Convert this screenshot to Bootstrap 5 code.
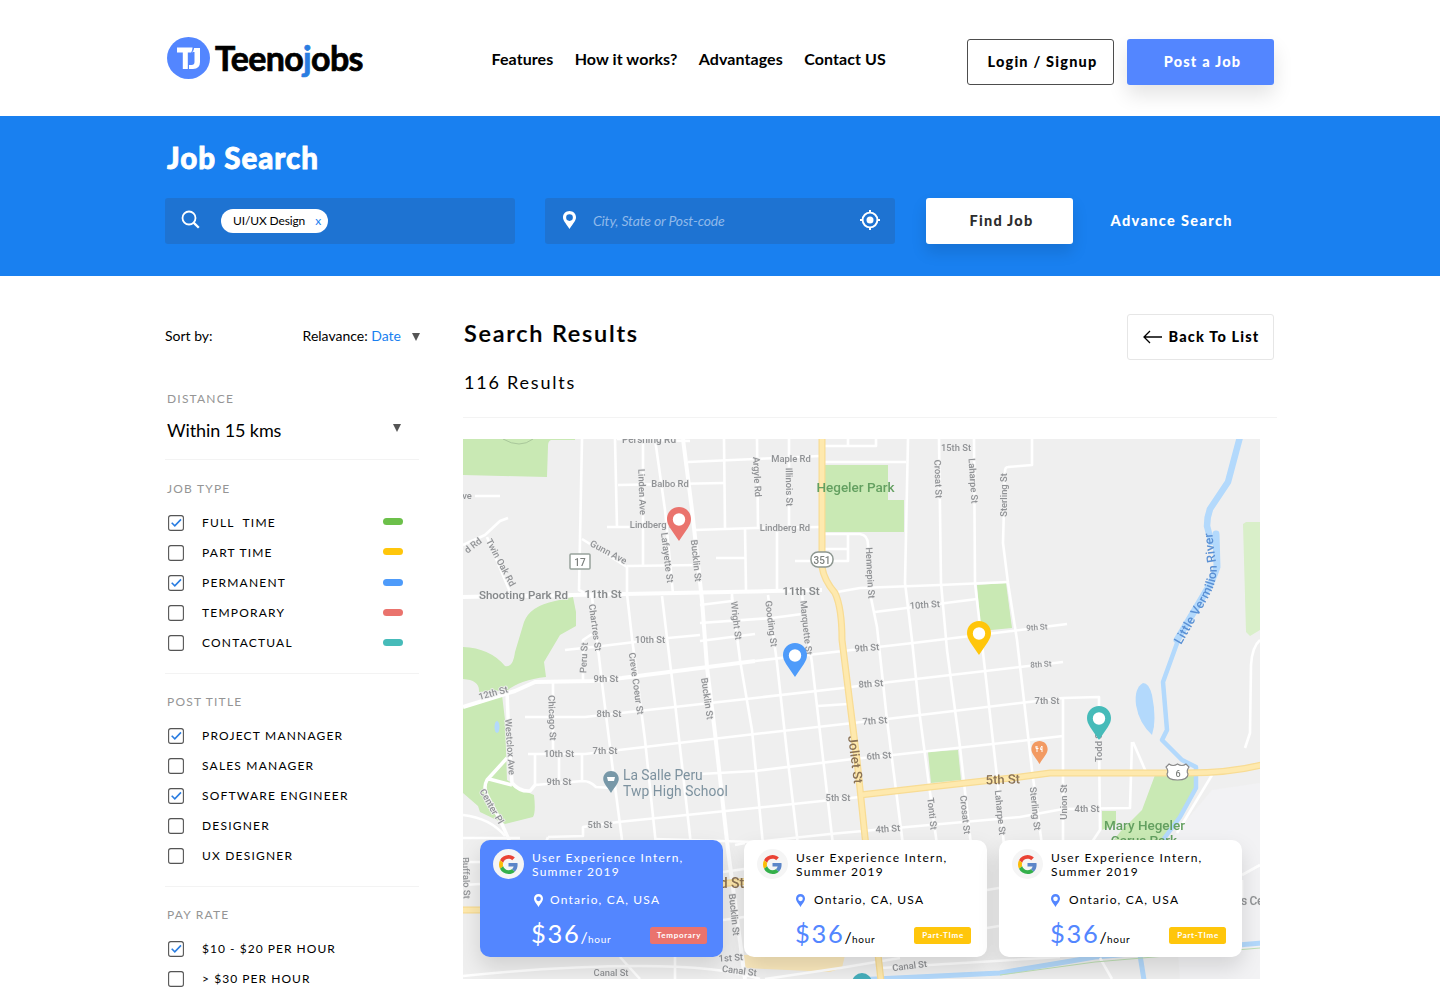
<!DOCTYPE html>
<html lang="en">
<head>
<meta charset="utf-8">
<meta name="viewport" content="width=device-width, initial-scale=1">
<title>Teenojobs - Job Search</title>
<link rel="stylesheet" href="https://cdn.jsdelivr.net/npm/bootstrap@5.3.0/dist/css/bootstrap.min.css">
<style>
body{font-family:Lato,"Liberation Sans",sans-serif;color:#000;background:#fff;font-size:14px}
.wrap{width:1110px;margin:0 auto}
.site-head{height:116px}
.brand-word{font-size:34px;font-weight:700;line-height:42px;letter-spacing:-.65px;margin-left:5px;width:276.500px;white-space:nowrap;-webkit-text-stroke:.7px currentColor}
.brand-word span{color:#2a7de1}
.main-nav{gap:21.3px;font-size:16px;font-weight:700;letter-spacing:.085px;line-height:24px;width:475.500px;white-space:nowrap;padding-top:2px}
.main-nav a{color:#000;text-decoration:none}
.cta{width:147px;height:46px;border-radius:3px;font-weight:900;font-size:14.500px;letter-spacing:1.2px;display:flex;align-items:center;justify-content:center;white-space:nowrap;padding:0;line-height:20px}
.cta-line{border:1px solid #4d4d4d;color:#000;padding-left:4px}
.cta-fill{background:#5386ff;color:#fff;box-shadow:0 10px 20px rgba(0,0,0,.11);padding-left:4px}
.hero{height:160px;background:#1980f0}
.hero h1{font-size:29.500px;font-weight:900;line-height:36px;letter-spacing:1px;color:#fff;margin:0;padding:24px 0 0 2px;-webkit-text-stroke:.8px #fff}
.field{width:350px;height:46px;border-radius:3px;background:#1e73d2}
.tagpill{height:24px;width:107px;border-radius:12px;background:#fff;font-size:12px;line-height:24px;padding:0 7px 0 12px;letter-spacing:-.13px}
.tagpill span{color:#1980f0}
.field em{color:#8fb9ea;font-size:14px;letter-spacing:-.18px;margin-top:-2px}
.cta-white{background:#fff;color:#2d2d2d;box-shadow:0 8px 16px rgba(0,0,0,.12);margin-left:31px;padding-left:4px}
.adv{font-weight:900;font-size:14.500px;letter-spacing:1.36px;color:#fff;margin:0 0 0 37.500px;text-decoration:none}
.side{width:254px;padding-top:50px}
.sort{line-height:20px}
.sort b{font-weight:400;color:#1980f0}
.grp{border-bottom:1px solid #f3f3f3;padding:18px 0 15px 2px}
.grp h2{font-size:12px;font-weight:400;letter-spacing:1.2px;line-height:20px;color:#959595;margin:0}
.opts{margin-top:9px}
.opt{height:30px;font-size:12px;letter-spacing:1.2px;white-space:pre}
.opt svg{margin:0 18px 1px 1px}
.chip{width:20px;height:7px;border-radius:4px;margin:-3px 16px 0 auto}
.res{width:814px;margin-left:44px;padding-top:38px}
.res h2{font-size:23.5px;font-weight:600;letter-spacing:1.75px;line-height:28px;margin:5px 0 0 1px;-webkit-text-stroke:.2px #000}
.res h3{font-size:18px;font-weight:400;letter-spacing:1.78px;line-height:24px;margin:23px 0 0 1px}
.cta-back{border:1px solid #e6e6e6;color:#000;letter-spacing:1.17px;margin-right:3px;padding:0 0 1px 1px}
.mapbox{position:relative;width:797px;height:540px;margin-top:21px;overflow:hidden}
.mapbox>svg{display:block}
.cards{position:absolute;left:17px;top:401px}
.jobc{width:243px;height:117px;border-radius:10px;background:#fff;box-shadow:0 10px 22px rgba(0,0,0,.13);padding:9px 16px 0 13px;letter-spacing:1.25px;font-size:12px;line-height:14px;white-space:nowrap}
.jobc .ava{width:31px;height:30px;border-radius:50%;background:#f5f5f5}
.jobc .ttl{margin:2px 0 0 8px}
.jobc .loc{margin:14px 0 0 41px;height:14px;letter-spacing:1.17px}
.jobc .pay{margin:7px 0 0 38px;height:38px}
.jobc .amt{font-size:25.500px;line-height:38px;color:#5386ff;letter-spacing:1.7px}
.jobc .per{font-size:10px;letter-spacing:.7px}
.jobc .per i{font-size:16px;font-style:normal;letter-spacing:.3px}
.jobc .kind{width:57px;height:17px;border-radius:2.5px;background:#ffc60b;color:#fff;font-size:8px;font-weight:700;letter-spacing:.7px;line-height:17px;text-align:center;margin-top:4px;padding-left:1px}
.jobc.on{background:#5386ff;color:#fff}
.jobc.on .amt{color:#fff}
.jobc.on .kind{background:#ea736d}
</style>
<script src="https://cdn.jsdelivr.net/npm/bootstrap@5.3.0/dist/js/bootstrap.bundle.min.js"></script>
</head>
<body>
<svg width="0" height="0" class="position-absolute">
<defs>
<symbol id="box" viewBox="0 0 16 16"><rect x=".6" y=".6" width="14.8" height="14.8" rx="2.2" fill="#fff" stroke="#555" stroke-width="1.1"/></symbol>
<symbol id="boxon" viewBox="0 0 16 16"><rect x=".6" y=".6" width="14.8" height="14.8" rx="2.2" fill="#fff" stroke="#555" stroke-width="1.1"/><path d="M3.700 7.800l3.100 3L13 4.400" fill="none" stroke="#2a7de1" stroke-width="1.600"/></symbol>
<symbol id="pin" viewBox="0 0 24 34"><path fill-rule="evenodd" d="M12 0C5.2 0 0 5.3 0 12c0 6.200 4.300 10.200 12 22 7.700-11.800 12-15.800 12-22C24 5.300 18.800 0 12 0zm0 6.300a6.200 6.200 0 1 1 0 12.400a6.200 6.200 0 1 1 0-12.400z"/></symbol>
<symbol id="goog" viewBox="0 0 48 48"><path fill="#ea4335" d="M24 9.500c3.540 0 6.710 1.220 9.210 3.600l6.850-6.850C35.900 2.380 30.470 0 24 0 14.620 0 6.510 5.380 2.560 13.220l7.980 6.190C12.430 13.720 17.740 9.500 24 9.500z"/><path fill="#5c86c8" d="M46.980 24.550c0-1.570-.15-3.090-.38-4.550H24v9.020h12.940c-.58 2.960-2.260 5.480-4.780 7.180l7.730 6c4.510-4.180 7.090-10.360 7.090-17.650z"/><path fill="#fbbc05" d="M10.530 28.590c-.48-1.450-.76-2.990-.76-4.590s.27-3.140.76-4.590l-7.980-6.190C.92 16.460 0 20.120 0 24c0 3.880.92 7.540 2.560 10.780l7.970-6.190z"/><path fill="#34b04b" d="M24 48c6.480 0 11.930-2.130 15.890-5.810l-7.730-6c-2.150 1.450-4.920 2.300-8.160 2.300-6.260 0-11.570-4.220-13.470-9.910l-7.980 6.190C6.510 42.620 14.620 48 24 48z"/></symbol>
</defs>
</svg>

<header class="site-head">
<div class="wrap d-flex align-items-center h-100">
  <svg class="flex-shrink-0" style="margin-left:2px" width="43" height="42" viewBox="0 0 43 42"><ellipse cx="21.500" cy="21" rx="21.500" ry="21" fill="#5386ff"/><path d="M10 13H25.500M18.300 12V32" stroke="#fff" stroke-width="5" fill="none"/><path d="M27 11H33V25Q33 32 26 32H22V28H24.500Q27.500 28 27.500 25V15H26z" fill="#fff"/><path d="M26.500 11L24 17" stroke="#5386ff" stroke-width=".9" fill="none"/></svg>
  <div class="brand-word">Teeno<span>j</span>obs</div>
  <nav class="main-nav d-flex"><a href="#">Features</a><a href="#">How it works?</a><a href="#">Advantages</a><a href="#">Contact US</a></nav>
  <div class="d-flex pt-2" style="gap:13px"><a class="btn cta cta-line">Login / Signup</a><a class="btn cta cta-fill">Post a Job</a></div>
</div>
</header>

<section class="hero">
<div class="wrap">
  <h1>Job Search</h1>
  <div class="d-flex align-items-center" style="margin-top:22px">
    <div class="field d-flex align-items-center">
      <svg style="margin:-3px 21px 0 16px" width="19" height="19" viewBox="0 0 19 19" fill="none" stroke="#fff"><circle cx="8" cy="8" r="6.500" stroke-width="1.800"/><path d="M12.600 12.600L17.800 17.800" stroke-width="2.300"/></svg>
      <div class="tagpill d-flex justify-content-between">UI/UX Design<span>x</span></div>
    </div>
    <div class="field d-flex align-items-center" style="margin-left:30px">
      <svg style="margin:-2px 17px 0 18px" width="13" height="18" viewBox="0 0 24 34" preserveAspectRatio="none" fill="#fff"><use href="#pin" width="24" height="34"/></svg>
      <em>City, State or Post-code</em>
      <svg class="ms-auto" style="margin:-2px 15px 0 0" width="20" height="20" viewBox="0 0 20 20" fill="none" stroke="#fff"><circle cx="10" cy="10" r="7.400" stroke-width="1.900"/><circle cx="10" cy="10" r="3.500" fill="#fff" stroke="none"/><path d="M10 0v3M10 17v3M0 10h3M17 10h3" stroke-width="2"/></svg>
    </div>
    <a class="btn cta cta-white">Find Job</a>
    <a class="adv" href="#">Advance Search</a>
  </div>
</div>
</section>

<div class="wrap d-flex">
<aside class="side flex-shrink-0">
  <div class="sort d-flex"><span>Sort by:</span><span class="ms-auto">Relavance: <b>Date</b></span><svg style="margin:7px -1px 0 11px" width="8" height="8"><path d="M0 0h8L4 8z" fill="#555"/></svg></div>
  <div class="grp" style="padding:43px 0 17px 2px"><h2>DISTANCE</h2>
    <div class="d-flex" style="font-size:18px;line-height:24px;margin-top:9px;letter-spacing:-.1px"><span>Within 15 kms</span><svg class="ms-auto" style="margin:6px 18px 0 0" width="8" height="8"><path d="M0 0h8L4 8z" fill="#555"/></svg></div></div>
  <div class="grp" style="padding-top:19px"><h2>JOB TYPE</h2><div class="opts">
    <div class="opt d-flex align-items-center"><svg width="16" height="16"><use href="#boxon"/></svg>FULL  TIME<span class="chip" style="background:#6cc04a"></span></div>
    <div class="opt d-flex align-items-center"><svg width="16" height="16"><use href="#box"/></svg>PART TIME<span class="chip" style="background:#ffc60b"></span></div>
    <div class="opt d-flex align-items-center"><svg width="16" height="16"><use href="#boxon"/></svg>PERMANENT<span class="chip" style="background:#4e9bfa;margin-top:-1px"></span></div>
    <div class="opt d-flex align-items-center"><svg width="16" height="16"><use href="#box"/></svg>TEMPORARY<span class="chip" style="background:#ea736d;margin-top:-1px"></span></div>
    <div class="opt d-flex align-items-center"><svg width="16" height="16"><use href="#box"/></svg>CONTACTUAL<span class="chip" style="background:#46bbb9;margin-top:-1px"></span></div>
  </div></div>
  <div class="grp"><h2>POST TITLE</h2><div class="opts">
    <div class="opt d-flex align-items-center"><svg width="16" height="16"><use href="#boxon"/></svg>PROJECT MANNAGER</div>
    <div class="opt d-flex align-items-center"><svg width="16" height="16"><use href="#box"/></svg>SALES MANAGER</div>
    <div class="opt d-flex align-items-center"><svg width="16" height="16"><use href="#boxon"/></svg>SOFTWARE ENGINEER</div>
    <div class="opt d-flex align-items-center"><svg width="16" height="16"><use href="#box"/></svg>DESIGNER</div>
    <div class="opt d-flex align-items-center"><svg width="16" height="16"><use href="#box"/></svg>UX DESIGNER</div>
  </div></div>
  <div class="grp border-0 pb-0"><h2>PAY RATE</h2><div class="opts">
    <div class="opt d-flex align-items-center" style="letter-spacing:1.03px"><svg width="16" height="16"><use href="#boxon"/></svg>$10 - $20 PER HOUR</div>
    <div class="opt d-flex align-items-center" style="letter-spacing:1.05px"><svg width="16" height="16"><use href="#box"/></svg>&gt; $30 PER HOUR</div>
  </div></div>
</aside>

<main class="res flex-shrink-0">
  <div class="d-flex justify-content-between align-items-start" style="height:103px">
    <div><h2>Search Results</h2><h3>116 Results</h3></div>
    <a class="btn cta cta-back"><svg style="margin-right:7px" width="19" height="14" fill="none" stroke="#000" stroke-width="1.300"><path d="M7 1L1 7l6 6M1 7h18"/></svg>Back To List</a>
  </div>
  <div style="height:1px;background:#f3f3f3"></div>
  <div class="mapbox">
  <svg width="797" height="540" viewBox="463 439 797 540">
    <defs><filter id="soft" x="-5%" y="-5%" width="110%" height="110%"><feGaussianBlur stdDeviation=".5"/></filter></defs>
    <rect x="463" y="439" width="797" height="540" fill="#efefef"/>
    <g filter="url(#soft)">
    <path fill="#f2f2f4" d="M1212 790L1260 783V979H1180L1170 840z"/>
    <g fill="#c9e9b4">
      <path d="M463 439H575V440H551Q548 441 548 446L547 477L463 475z"/>
      <path d="M824 465H888V500H904V532H824z"/>
      <path d="M977 585L1006 583L1012 628L981 631z"/>
      <path d="M573 597L576 612V626L560 635L544 662L546 677Q520 680 508 690L479 692Q480 680 463 679V647Q490 648 505 666Q513 668 515 652L524 622Q530 606 555 601z"/>
      <path d="M463 707L502 695L505 720L507 780L527 792L534 795Q536 812 533 817L505 824L480 812L478 806L463 793z"/>
      <path d="M928 752L958 750L961 780L931 783z"/>
      <path d="M1155 775H1195L1197 788L1180 817L1160 845H1110L1120 832L1142 810z"/>
      <path d="M1102 811H1116V824L1102 830z"/>
    </g>
    <path fill="#d9efc9" d="M1246 522H1260V630L1250 636L1246 632L1243 524z"/>
    <path fill="#fbe9bd" d="M744 955H845L842 968L830 972L745 968z"/>
    <g fill="none" stroke="#b3d9fc">
      <path stroke-width="6.500" stroke-linejoin="round" d="M1240 437L1228 482L1210 509Q1207 517 1207 526L1212 545"/>
      <path stroke-width="7" stroke-linecap="round" d="M1216 534L1217 567Q1212 582 1205 593L1177 640"/>
      <path stroke-width="4.500" stroke-linejoin="round" d="M1180 635L1163 682L1167 730L1162 740L1182 760L1196 767V788L1180 817L1163 840"/>
      <path stroke-width="5" d="M855 980L1000 973L1095 957L1262 943M1140 955L1144 980"/>
    </g>
    <path fill="#b3d9fc" d="M1143 683Q1134 688 1136 705Q1139 723 1152 735Q1157 720 1152 695Q1149 683 1143 683z"/>
    <ellipse cx="497" cy="727" rx="2.500" ry="6" fill="#b3d9fc"/>
    <path d="M503 439Q520 449 533 439" fill="none" stroke="#a9c79b"/>
    <g fill="none" stroke="#fff" stroke-width="2.600" stroke-linejoin="round">
      <path stroke-width="4" d="M463 597L625 594L822 590"/>
      <path d="M837 592L860 588L940 585L1008 582"/>
      <path stroke-width="4" d="M463 707L515 691L535 682L592 681L622 678L755 661"/>
      <path d="M755 661L843 651L913 643L1020 630L1067 624"/>
      <path d="M525 717H585L755 698L843 688L890 682L1020 667L1063 662"/>
      <path d="M528 754H585L755 734L853 723L887 719L1020 703L1063 698L1099 697V740L1100 830L1092 842"/>
      <path d="M700 774L755 771L853 759L893 755L1020 741L1063 736"/>
      <path d="M548 837L583 836V827L618 822L755 808L860 797"/>
      <path d="M655 839L755 842L830 834L907 827L1020 817L1063 809L1130 808L1132 742M1133 742L1146 772"/>
      <path d="M565 650L602 646L668 638L700 635M700 641L755 634M700 623L772 618L802 614M700 605L732 601V594"/>
      <path d="M583 681V640L592 634M875 612L977 599M818 706L848 704"/>
      <path d="M607 527H664M695 530L755 528L820 527M618 485L724 483M688 462L820 456M617 439L690 441"/>
      <path d="M582 439L579 590L592 597L602 683L612 763L622 840"/>
      <path d="M615 439L617 528M643 439V565M655 439L665 510L673 594M724 439L725 529"/>
      <path stroke-width="4" d="M683 439L692 510L702 600L707 667L715 733L728 850L745 979"/>
      <path d="M757 439L758 528M789 439V527M745 528L746 590M777 530V590M716 558H746M582 539L627 567L627 594L632 638L645 740L656 845M627 566L700 565"/>
      <path d="M662 596L667 638L675 703L691 845M732 597L740 660L752 730L763 845M768 595L777 663L787 753L798 845M802 595L812 663L833 845"/>
      <path d="M824 446H876V439M824 462H906M824 534H860Q868 535 868 545L870 593L877 627L887 720L903 845M824 549H848M848 534V561H795M848 439L848 446"/>
      <path d="M908 439L905 583L912 640L920 717L937 845M939 439L941 583L947 650L960 747L971 845M974 439L975 583L985 670L997 777L1004 845M1032 439V465L1008 467Q1005 467 1005 472L1003 543L1008 583L1017 640L1032 770L1042 845M1063 698V845"/>
      <path d="M1260 640Q1252 647 1251 665L1250 733L1245 748M1212 775L1177 833"/>
      <path d="M475 496H500M463 545L485 535L500 521L508 518M487 537L510 592"/>
      <path d="M553 682V754M535 754V785M559 754V783M582 754V781M535 785L583 781Q590 781 596 787L612 788"/>
      <path stroke-width="3.500" d="M507 692L509 740L512 783Q520 792 530 791L535 785M507 758L487 780Q483 787 487 795L500 820L510 842M489 779L512 785"/>
      <path d="M463 815Q490 818 505 836M463 838H520M545 845L548 837M463 885L480 884M463 862H480M735 845L745 843M723 872L744 869M723 920L744 917M987 890L999 888M987 928L999 926M1242 875L1260 865M1242 880V900"/>
      <path d="M463 976Q560 966 640 966T760 979M620 957L640 979M675 957V979M765 979L840 968L900 958M880 968L1060 957M1100 958L1112 979"/>
    </g>
    <path d="M1000 975L1095 962L1260 948" fill="none" stroke="#bfe0b4" stroke-width="1"/>
    <g fill="none">
      <g stroke="#f8dc94" stroke-width="7"><path d="M822 437V567Q824 580 835 593Q842 608 842 640L857 760L865 837L881 981"/><path d="M860 795L930 787L1020 777L1050 773H1177Q1225 774 1262 765M463 910H480M720 884L875 868"/></g>
      <g stroke="#fee9ae" stroke-width="4.500"><path d="M822 437V567Q824 580 835 593Q842 608 842 640L857 760L865 837L881 981"/><path d="M860 795L930 787L1020 777L1050 773H1177Q1225 774 1262 765M463 910H480M720 884L875 868"/></g>
    </g>
    <g font-family="Roboto,sans-serif" font-size="9.400" font-weight="500" fill="#909295" stroke="#efefef" stroke-width="1.600" paint-order="stroke" text-anchor="middle">
      <text x="649" y="443" font-size="10">Pershing Rd</text><text x="791" y="462">Maple Rd</text><text x="670" y="487">Balbo Rd</text><text x="655" y="528">Lindberg Rd</text><text x="785" y="531">Lindberg Rd</text><text x="956" y="451">15th St</text>
      <text x="467" y="499">ve</text><text transform="translate(475 548)rotate(-38)">d Rd</text>
      <text transform="translate(498 564)rotate(62)">Twin Oak Rd</text><text transform="translate(607 555)rotate(28)">Gunn Ave</text>
      <text transform="translate(639 492)rotate(88)">Linden Ave</text><text transform="translate(664 558)rotate(83)">Lafayette St</text><text transform="translate(693 561)rotate(84)">Bucklin St</text><text transform="translate(754 477)rotate(87)">Argyle Rd</text><text transform="translate(786 487)rotate(89)">Illinois St</text>
      <text transform="translate(935 479)rotate(88)">Crosat St</text><text transform="translate(970 481)rotate(86)">Laharpe St</text><text transform="translate(1007 495)rotate(-90)">Sterling St</text><text transform="translate(867 573)rotate(87)">Hennepin St</text>
      <text transform="translate(592 628)rotate(82)">Chartres St</text><text transform="translate(587 658)rotate(-87)">Peru St</text><text transform="translate(633 684)rotate(82)">Creve Coeur St</text><text transform="translate(704 699)rotate(82)">Bucklin St</text><text transform="translate(733 621)rotate(83)">Wright St</text><text transform="translate(768 624)rotate(83)">Gooding St</text><text transform="translate(803 628)rotate(84)">Marquette St</text>
      <text transform="translate(549 718)rotate(88)">Chicago St</text><text transform="translate(507 747)rotate(86)">Westclox Ave</text><text transform="translate(489 808)rotate(60)">Center Pl</text>
      <text x="650" y="643">10th St</text><text x="606" y="682">9th St</text><text x="609" y="717">8th St</text><text x="605" y="754">7th St</text><text x="559" y="757">10th St</text><text x="559" y="785">9th St</text><text x="600" y="828">5th St</text>
      <text transform="translate(494 696)rotate(-15)">12th St</text>
      <text transform="translate(925 608)rotate(-4)">10th St</text><text transform="translate(1037 630)rotate(-4)" font-size="8">9th St</text><text transform="translate(867 651)rotate(-4)">9th St</text><text transform="translate(871 687)rotate(-4)">8th St</text><text transform="translate(875 724)rotate(-4)">7th St</text><text transform="translate(879 759)rotate(-4)">6th St</text><text x="838" y="801">5th St</text><text transform="translate(888 832)rotate(-4)">4th St</text>
      <text transform="translate(1041 667)rotate(-4)" font-size="8">8th St</text><text x="1047" y="704">7th St</text><text x="1087" y="812">4th St</text>
      <text transform="translate(929 814)rotate(84)">Tonti St</text><text transform="translate(962 815)rotate(84)">Crosat St</text><text transform="translate(997 813)rotate(84)">Laharpe St</text><text transform="translate(1032 809)rotate(84)">Sterling St</text><text transform="translate(1067 802)rotate(-90)">Union St</text><text transform="translate(1102 746)rotate(-90)">Todd St</text>
      <text transform="translate(463 878)rotate(88)">Buffalo St</text><text transform="translate(731 915)rotate(84)">Bucklin St</text><text x="611" y="976">Canal St</text><text x="731" y="961" transform="rotate(-4 731 961)">1st St</text><text transform="translate(739 974)rotate(7)">Canal St</text><text transform="translate(910 969)rotate(-7)">Canal St</text>
      <g font-size="11.500" fill="#85888a"><text x="523.500" y="599">Shooting Park Rd</text><text x="603" y="598">11th St</text><text x="801" y="595">11th St</text></g>
      <g fill="#8b7355"><text font-size="13" transform="translate(851 760)rotate(83)" stroke="none">Joliet St</text><text font-size="13" transform="translate(1003 784)rotate(-2)" stroke="none">5th St</text><text font-size="14" x="732" y="888" stroke="none">d St</text></g>
      <text x="855.500" y="492" font-size="13.500" fill="#64a061" stroke="none">Hegeler Park</text>
      <g font-size="13.500" fill="#64a061" stroke="none"><text x="1144.500" y="830">Mary Hegeler</text><text x="1144" y="845">Carus Park</text></g>
      <g font-size="13.800" font-weight="400" fill="#7d929f" text-anchor="start"><text x="623" y="780">La Salle Peru</text><text x="623" y="796" letter-spacing=".1">Twp High School</text></g>
      <text x="1241" y="905" font-size="12" text-anchor="start" letter-spacing="-.3">s Ce</text>
      <g fill="#5a90d4" stroke="none" font-size="12.500"><path id="rv" d="M1181 645L1207 600Q1219 580 1216 562T1211 515" fill="none"/><text text-anchor="start" letter-spacing=".25"><textPath href="#rv">Little Vermilion River</textPath></text></g>
    </g>
    <g font-family="Roboto,sans-serif" font-size="10" font-weight="500" fill="#7b7f7c" text-anchor="middle">
      <rect x="570" y="554" width="20" height="15" rx="1" fill="#fff" stroke="#98a39c" stroke-width="1.500"/><text x="580" y="565.500">17</text>
      <rect x="811" y="552" width="22" height="15" rx="7" fill="#fff" stroke="#8d9791" stroke-width="1.500"/><text x="822" y="563.500">351</text>
      <path d="M1169 764Q1173 767 1177.500 764Q1182 767 1186 764L1189 767Q1186 771 1188 774Q1188 780 1177.500 780T1167 774Q1169 771 1166 767z" fill="#fff" stroke="#888" stroke-width="1.200"/><text x="1178" y="776.500" font-size="9">6</text>
    </g>
    <use href="#pin" x="603" y="771" width="16" height="22" fill="#7898a8"/><circle cx="611" cy="779" r="5" fill="#7898a8"/><path d="M607 777h8l-1 4h-6z" fill="#fff"/>
    <use href="#pin" x="1031" y="741" width="17" height="23" fill="#f29a62"/><circle cx="1039.500" cy="749" r="5.500" fill="#f29a62"/><path d="M1037 746v6M1036 746v2.500h2.500M1042 752v-6q-1.500 1-1.500 3.500h1.500" stroke="#fff" fill="none"/>
    </g>
    <g><circle cx="679" cy="520" r="7" fill="#fff"/><use href="#pin" x="667" y="507" width="24" height="34" fill="#ea736d"/>
    <circle cx="795" cy="656" r="7" fill="#fff"/><use href="#pin" x="783" y="643" width="24" height="34" fill="#4e9bfa"/>
    <circle cx="979" cy="634" r="7" fill="#fff"/><use href="#pin" x="967" y="621" width="24" height="34" fill="#ffc60b"/>
    <circle cx="1099" cy="719" r="7" fill="#fff"/><use href="#pin" x="1087" y="706" width="24" height="34" fill="#46bbb9"/>
    <circle cx="862" cy="983" r="10" fill="#46aebb"/></g>
  </svg>
  <div class="cards d-flex">
    <div class="jobc on"><div class="d-flex"><div class="ava d-flex align-items-center justify-content-center"><svg width="19" height="19"><use href="#goog"/></svg></div><div class="ttl">User Experience Intern,<br>Summer 2019</div></div>
      <div class="loc d-flex align-items-center"><svg width="9" height="13" viewBox="0 0 24 34" preserveAspectRatio="none" fill="#fff" style="margin-right:7px"><use href="#pin" width="24" height="34"/></svg>Ontario, CA, USA</div>
      <div class="pay d-flex align-items-center"><div class="d-flex align-items-baseline"><span class="amt">$36</span><span class="per"><i>/</i>hour</span></div><div class="kind ms-auto">Temporary</div></div></div>
    <div class="jobc" style="margin-left:21px"><div class="d-flex"><div class="ava d-flex align-items-center justify-content-center"><svg width="19" height="19"><use href="#goog"/></svg></div><div class="ttl">User Experience Intern,<br>Summer 2019</div></div>
      <div class="loc d-flex align-items-center" style="margin-left:39px"><svg width="9" height="13" viewBox="0 0 24 34" preserveAspectRatio="none" fill="#5386ff" style="margin-right:9px"><use href="#pin" width="24" height="34"/></svg>Ontario, CA, USA</div>
      <div class="pay d-flex align-items-center"><div class="d-flex align-items-baseline"><span class="amt">$36</span><span class="per"><i>/</i>hour</span></div><div class="kind ms-auto">Part-TIme</div></div></div>
    <div class="jobc" style="margin-left:12px"><div class="d-flex"><div class="ava d-flex align-items-center justify-content-center"><svg width="19" height="19"><use href="#goog"/></svg></div><div class="ttl">User Experience Intern,<br>Summer 2019</div></div>
      <div class="loc d-flex align-items-center" style="margin-left:39px"><svg width="9" height="13" viewBox="0 0 24 34" preserveAspectRatio="none" fill="#5386ff" style="margin-right:9px"><use href="#pin" width="24" height="34"/></svg>Ontario, CA, USA</div>
      <div class="pay d-flex align-items-center"><div class="d-flex align-items-baseline"><span class="amt">$36</span><span class="per"><i>/</i>hour</span></div><div class="kind ms-auto">Part-TIme</div></div></div>
  </div>
  </div>
</main>
</div>
</body>
</html>
